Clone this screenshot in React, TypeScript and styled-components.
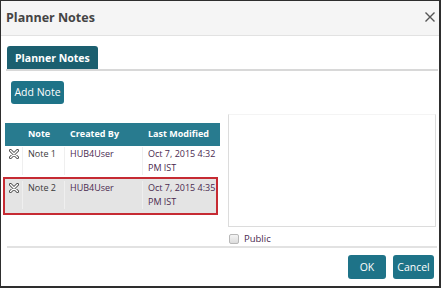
import styled, { createGlobalStyle } from 'styled-components';

const GlobalStyle = createGlobalStyle`
  html, body {
    margin: 0;
    padding: 0;
    background: #fff;
  }
  * {
    box-sizing: border-box;
  }
`;

const Dialog = styled.div`
  width: 441px;
  height: 288px;
  border: 1px solid #2e2e2e;
  border-right-width: 2px;
  border-bottom-width: 2px;
  background: #fff;
  font-family: 'Open Sans', 'Liberation Sans', sans-serif;
  display: flex;
  flex-direction: column;
`;

const Header = styled.div`
  height: 35px;
  flex: none;
  background: #f5f5f5;
  border-bottom: 1px solid #e2e2e2;
  display: flex;
  align-items: center;
  justify-content: space-between;
  padding: 0 3px 2px 5px;
`;

const Title = styled.h1`
  margin: 0;
  font-size: 12.5px;
  font-weight: 700;
  color: #444;
`;

const CloseButton = styled.button`
  border: 0;
  background: none;
  padding: 0;
  width: 12px;
  height: 12px;
  display: flex;
  cursor: pointer;
`;

const Body = styled.div`
  flex: 1;
  display: flex;
  flex-direction: column;
  padding: 10px 1px 0 4px;
`;

const TabBar = styled.div`
  display: flex;
  border-bottom: 2px solid #d8d8d8;
  margin-left: 1px;
`;

const Tab = styled.div`
  margin-left: 1px;
  height: 23px;
  padding: 0 8px;
  display: flex;
  align-items: center;
  background: #1b5f6f;
  color: #fff;
  font-size: 10.5px;
  font-weight: 700;
  border-radius: 3px 3px 0 0;
`;

const TealButton = styled.button<{ $w: number }>`
  width: ${p => p.$w}px;
  height: ${p => (p.$w > 50 ? 23 : 24)}px;
  border: 0;
  border-radius: 3px;
  background: #1e7388;
  color: #fff;
  font-family: inherit;
  font-size: 10.5px;
  padding: 0;
  cursor: pointer;
`;

const Toolbar = styled.div`
  padding: 8px 0 0 6px;
`;

const Content = styled.div`
  display: flex;
  margin-top: 10px;
  gap: 7px;
`;

const NotesTable = styled.div`
  width: 215px;
  margin-top: 9px;
  font-size: 9px;
  line-height: 14px;
`;

const columns = '17px 42px 78px 78px';

const Row = styled.div<{ $selected?: boolean }>`
  display: grid;
  grid-template-columns: ${columns};
  background: ${p => (p.$selected ? '#e4e4e4' : '#fff')};
  border: ${p => (p.$selected ? '2px solid #c62b33' : '0')};
  margin: ${p => (p.$selected ? '0 2px 0 -2px' : '0')};
  padding: ${p => (p.$selected ? '2px 0 4px' : '1px 0 2px')};
`;

const HeadRow = styled.div`
  display: grid;
  grid-template-columns: ${columns};
  height: 23px;
  align-items: center;
  background: #287b8f;
  color: #fff;
  font-weight: 700;
`;

const HeadCell = styled.div`
  padding-left: 6px;
`;

const Cell = styled.div<{ $accent?: boolean }>`
  padding: 0 2px 0 5px;
  color: ${p => (p.$accent ? '#4a2a4f' : '#3a3a3a')};
  border-left: 1px solid #efefef;
`;

const IconCell = styled.div`
  display: flex;
  justify-content: center;
  padding-top: 2px;
`;

const Side = styled.div`
  flex: 1;
  display: flex;
  flex-direction: column;
  margin-right: 2px;
`;

const NoteText = styled.textarea`
  height: 113px;
  border: 1px solid #dcdcdc;
  border-top-color: #f4f4f4;
  resize: none;
  outline: none;
  margin-left: 1px;
`;

const PublicRow = styled.label`
  display: flex;
  align-items: center;
  gap: 5px;
  height: 12px;
  margin-top: 6px;
  margin-left: 2px;
  font-size: 9.5px;
  color: #4a2a4f;
`;

const Box = styled.span`
  width: 10px;
  height: 10px;
  border: 1px solid #b8b8b8;
  border-radius: 2px;
  background: linear-gradient(#f4f4f4, #dcdcdc);
`;

const Footer = styled.div`
  margin-top: 1px;
  margin-right: 1px;
  margin-left: 2px;
  border-top: 2px solid #e2e2e2;
  display: flex;
  justify-content: flex-end;
  gap: 7px;
  padding: 7px 3px 0 0;
`;

function DeleteIcon() {
  return (
    <svg width="10" height="10" viewBox="0 0 10 10">
      <path d="M1.5 1.5L8.5 8.5M8.5 1.5L1.5 8.5" stroke="#333" strokeWidth="3" strokeLinecap="round" />
      <path d="M1.5 1.5L8.5 8.5M8.5 1.5L1.5 8.5" stroke="#fff" strokeWidth="1.5" strokeLinecap="round" />
    </svg>
  );
}

const notes = [
  { name: 'Note 1', by: 'HUB4User', date: 'Oct 7, 2015 4:32 PM IST' },
  { name: 'Note 2', by: 'HUB4User', date: 'Oct 7, 2015 4:35 PM IST', selected: true },
];

export default function App() {
  return (
    <>
      <GlobalStyle />
      <Dialog>
        <Header>
          <Title>Planner Notes</Title>
          <CloseButton aria-label="Close">
            <svg width="12" height="12" viewBox="0 0 12 12">
              <path d="M1.5 1.5L10.5 10.5M10.5 1.5L1.5 10.5" stroke="#555" strokeWidth="1.4" />
            </svg>
          </CloseButton>
        </Header>
        <Body>
          <TabBar>
            <Tab>Planner Notes</Tab>
          </TabBar>
          <Toolbar>
            <TealButton $w={53}>Add Note</TealButton>
          </Toolbar>
          <Content>
            <NotesTable>
              <HeadRow>
                <div />
                <HeadCell>Note</HeadCell>
                <HeadCell>Created By</HeadCell>
                <HeadCell>Last Modified</HeadCell>
              </HeadRow>
              {notes.map(n => (
                <Row key={n.name} $selected={n.selected}>
                  <IconCell>
                    <DeleteIcon />
                  </IconCell>
                  <Cell>{n.name}</Cell>
                  <Cell $accent>{n.by}</Cell>
                  <Cell $accent>{n.date}</Cell>
                </Row>
              ))}
            </NotesTable>
            <Side>
              <NoteText />
              <PublicRow>
                <Box />
                Public
              </PublicRow>
            </Side>
          </Content>
          <Footer>
            <TealButton $w={38}>OK</TealButton>
            <TealButton $w={41}>Cancel</TealButton>
          </Footer>
        </Body>
      </Dialog>
    </>
  );
}
